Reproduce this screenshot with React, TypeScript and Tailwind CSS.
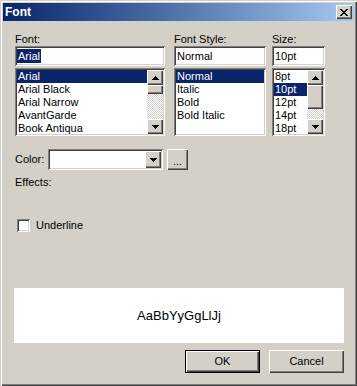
import React from "react";

const sunken =
  "shadow-[inset_1px_1px_0_#808080,inset_-1px_-1px_0_#ffffff,inset_2px_2px_0_#404040,inset_-2px_-2px_0_#d4d0c8]";
const raised =
  "shadow-[inset_1px_1px_0_#ffffff,inset_-1px_-1px_0_#404040,inset_-2px_-2px_0_#808080]";

function Up() {
  return (
    <svg width="7" height="4" viewBox="0 0 7 4" shapeRendering="crispEdges">
      <path d="M3 0h1v1h1v1h1v1h1v1H0V3h1V2h1V1h1z" fill="#000" />
    </svg>
  );
}
function Down() {
  return (
    <svg width="7" height="4" viewBox="0 0 7 4" shapeRendering="crispEdges">
      <path d="M0 0h7v1H6v1H5v1H4v1H3V3H2V2H1V1H0z" fill="#000" />
    </svg>
  );
}

function ScrollBar({ thumb }: { thumb: number }) {
  return (
    <div className="flex w-[16px] flex-col">
      <div className={`flex h-[15px] items-center justify-center bg-[#d4d0c8] ${raised}`}>
        <Up />
      </div>
      <div className={`bg-[#d4d0c8] ${raised}`} style={{ height: thumb }} />
      <div className="flex-1 bg-[repeating-conic-gradient(#d4d0c8_0_25%,#ffffff_0_50%)] bg-[length:2px_2px]" />
      <div className={`flex h-[15px] items-center justify-center bg-[#d4d0c8] ${raised}`}>
        <Down />
      </div>
    </div>
  );
}

function List({
  items,
  selected,
  scroll,
  thumb,
}: {
  items: string[];
  selected: number;
  scroll: boolean;
  thumb?: number;
}) {
  return (
    <div className={`mt-[2px] flex h-[68px] bg-white p-[2px] ${sunken}`}>
      <div className="flex-1 overflow-hidden">
        {items.map((it, i) => (
          <div
            key={it}
            className={`h-[13px] whitespace-nowrap pl-[1px] text-[11px] leading-[13px] ${
              i === selected ? "bg-[#0a246a] text-white" : "text-black"
            }`}
          >
            {it}
          </div>
        ))}
      </div>
      {scroll && <ScrollBar thumb={thumb ?? 9} />}
    </div>
  );
}

function Field({ value, selected }: { value: string; selected?: boolean }) {
  return (
    <div className={`flex h-[20px] items-center bg-white px-[2px] ${sunken}`}>
      <span
        className={`px-[1px] text-[11px] leading-[14px] ${
          selected ? "bg-[#0a246a] text-white" : "text-black"
        }`}
      >
        {value}
      </span>
    </div>
  );
}

export default function App() {
  return (
    <div
      className="flex h-[386px] w-[357px] flex-col bg-[#d4d0c8] p-[3px] text-[11px] leading-[13px] text-black font-['Liberation_Sans',Arial,sans-serif] shadow-[inset_1px_1px_0_#d4d0c8,inset_2px_2px_0_#ffffff,inset_-1px_-1px_0_#404040,inset_-2px_-2px_0_#808080]"
    >
      {/* Title bar */}
      <div className="flex h-[18px] items-center justify-between bg-linear-to-r from-[#0a246a] to-[#a6caf0] pl-[2px] pr-[2px]">
        <span className="text-[12px] font-bold leading-[14px] text-white">Font</span>
        <div className={`flex h-[14px] w-[16px] items-center justify-center bg-[#d4d0c8] ${raised}`}>
          <svg width="8" height="7" viewBox="0 0 8 7" shapeRendering="crispEdges">
            <path
              d="M0 0h2v1h1v1h2V1h1V0h2v1H7v1H6v1H5v1h1v1h1v1h1v1H6V6H5V5H3v1H2v1H0V6h1V5h1V4h1V3H2V2H1V1H0z"
              fill="#000"
            />
          </svg>
        </div>
      </div>

      {/* Top columns */}
      <div className="ml-[12px] mt-[12px] flex">
        <div className="w-[150px]">
          <div className="h-[13px]">Font:</div>
          <Field value="Arial" selected />
          <List
            items={["Arial", "Arial Black", "Arial Narrow", "AvantGarde", "Book Antiqua"]}
            selected={0}
            scroll
            thumb={9}
          />
        </div>
        <div className="ml-[9px] w-[92px]">
          <div className="h-[13px]">Font Style:</div>
          <Field value="Normal" />
          <List items={["Normal", "Italic", "Bold", "Bold Italic"]} selected={0} scroll={false} />
        </div>
        <div className="ml-[6px] w-[53px]">
          <div className="h-[13px]">Size:</div>
          <Field value="10pt" />
          <List items={["8pt", "10pt", "12pt", "14pt", "18pt"]} selected={1} scroll thumb={24} />
        </div>
      </div>

      {/* Color row */}
      <div className="ml-[12px] mt-[13px] flex h-[21px] items-center">
        <div className="w-[33px]">Color:</div>
        <div className={`flex h-[21px] w-[115px] items-center justify-end bg-white p-[2px] ${sunken}`}>
          <div className={`flex h-[17px] w-[16px] items-center justify-center bg-[#d4d0c8] ${raised}`}>
            <Down />
          </div>
        </div>
        <div
          className={`ml-[4px] flex h-[21px] w-[21px] items-end justify-center bg-[#d4d0c8] pb-[5px] leading-[8px] ${raised}`}
        >
          ...
        </div>
      </div>

      <div className="ml-[12px] mt-[6px] h-[13px]">Effects:</div>

      <div className="ml-[14px] mt-[30px] flex h-[13px] items-center">
        <div className={`h-[13px] w-[13px] bg-white ${sunken}`} />
        <span className="ml-[6px]">Underline</span>
      </div>

      {/* Preview */}
      <div className="ml-[11px] mt-[56px] flex h-[55px] w-[330px] items-center justify-center bg-white">
        <span className="text-[13px] leading-[15px]">AaBbYyGgLlJj</span>
      </div>

      {/* Buttons */}
      <div className="mt-[7px] flex w-[341px] justify-end gap-[9px]">
        <div className="h-[23px] w-[75px] border border-black">
          <div className={`flex h-full w-full items-center justify-center bg-[#d4d0c8] ${raised}`}>OK</div>
        </div>
        <div className={`flex h-[23px] w-[75px] items-center justify-center bg-[#d4d0c8] ${raised}`}>
          Cancel
        </div>
      </div>
    </div>
  );
}
